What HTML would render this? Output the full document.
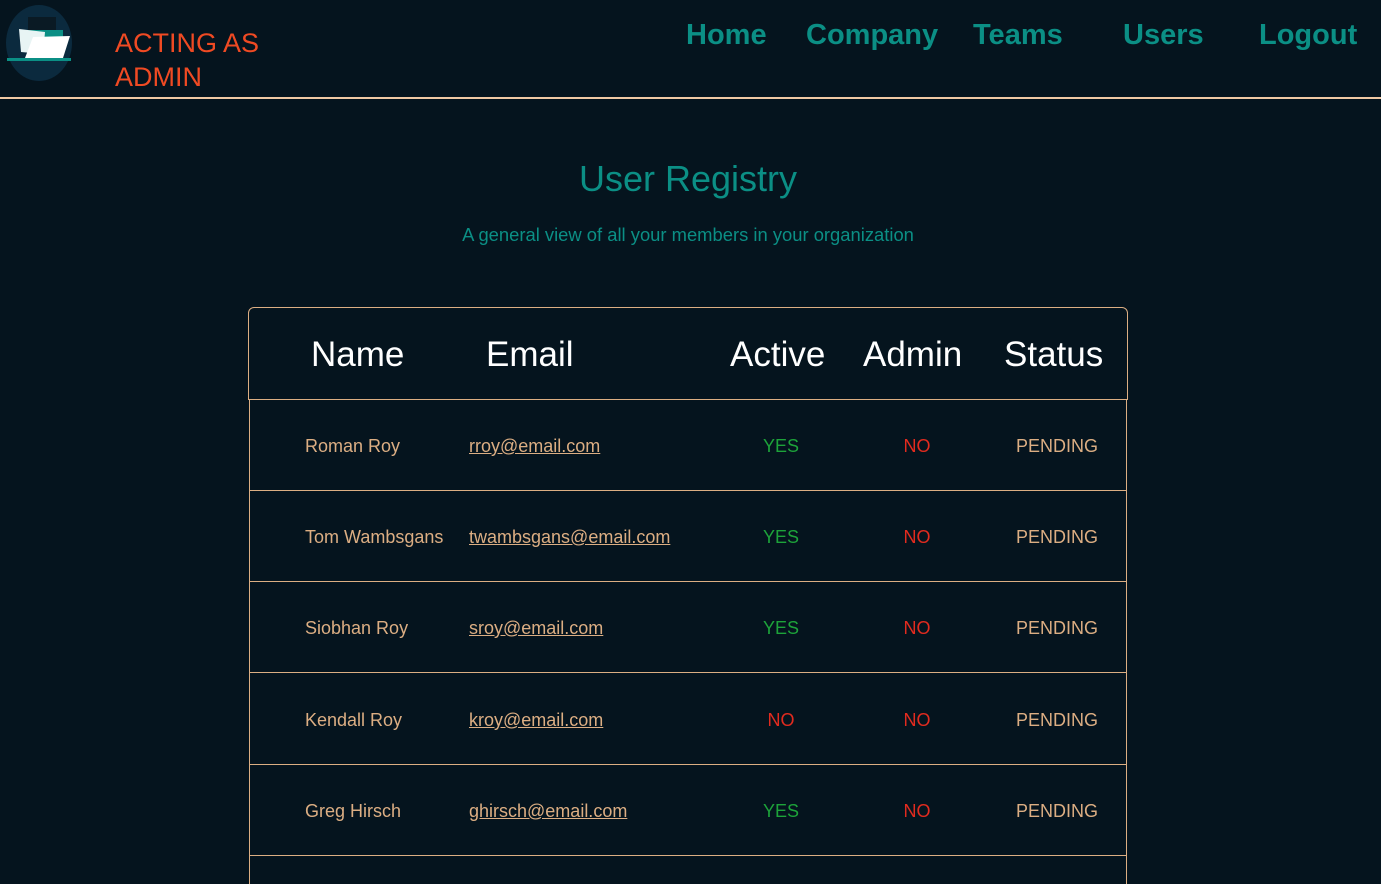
<!DOCTYPE html>
<html style="overflow:hidden;height:884px"><head><meta charset="utf-8"><style>
html,body{margin:0;width:1381px;height:884px;overflow:hidden}
body{background:#05141e;font-family:"Liberation Sans",sans-serif;position:relative}
.a{position:absolute;white-space:nowrap}
.nav{top:19px;font-weight:bold;font-size:29px;color:#0b8f85}
.hd{color:#fff;font-size:35px;top:335px}
.row{position:absolute;left:249px;width:876px;height:90px;border-left:1px solid #dcae83;border-right:1px solid #dcae83;border-bottom:1px solid #dcae83}
.row span{position:absolute;top:36px;font-size:18px;white-space:nowrap}
.n{left:55px;color:#dcae83}
.e{left:219px;color:#dcae83;text-decoration:underline}
.c{transform:translateX(-50%)}
.y{color:#1da33a}.no{color:#e22b1f}.p{color:#dcae83}
</style></head><body>
<svg class="a" style="left:5px;top:4px" width="68" height="78" viewBox="0 0 68 78">
<ellipse cx="34" cy="39" rx="33" ry="38" fill="#0b2a3e"/>
<rect x="23" y="13" width="28" height="20" fill="#0a1a24"/>
<rect x="22" y="26" width="36" height="30" fill="#0b8f85"/>
<polygon points="14,25 40,28 38,50 16,48" fill="#e8f4f4"/>
<polygon points="28,33 65,32 58,54 20,54" fill="#fff"/>
<rect x="2" y="54" width="64" height="3" fill="#0b8f85"/>
</svg>
<div class="a" style="left:115px;top:26px;font-size:27px;line-height:34px;color:#f04a23">ACTING AS<br>ADMIN</div>
<div class="a nav" style="left:686px">Home</div>
<div class="a nav" style="left:806px">Company</div>
<div class="a nav" style="left:973px">Teams</div>
<div class="a nav" style="left:1123px">Users</div>
<div class="a nav" style="left:1259px">Logout</div>
<div class="a" style="left:0;top:97px;width:1381px;height:2px;background:#f0c9a4"></div>
<div class="a" style="left:0;width:1376px;text-align:center;top:158px;font-size:36px;color:#0b8f85">User Registry</div>
<div class="a" style="left:0;width:1376px;text-align:center;top:224px;font-size:18.4px;color:#0b8f85">A general view of all your members in your organization</div>
<div class="a" style="left:248px;top:307px;width:878px;height:91px;border:1px solid #dcae83;border-radius:6px 6px 0 0"></div>
<div class="a hd" style="left:311px">Name</div>
<div class="a hd" style="left:486px">Email</div>
<div class="a hd" style="left:730px">Active</div>
<div class="a hd" style="left:863px">Admin</div>
<div class="a hd" style="left:1004px">Status</div>
<div class="row" style="top:400px"><span class="n">Roman Roy</span><span class="e">rroy@email.com</span><span class="c y" style="left:531px">YES</span><span class="c no" style="left:667px">NO</span><span class="c p" style="left:807px">PENDING</span></div>
<div class="row" style="top:491px"><span class="n">Tom Wambsgans</span><span class="e">twambsgans@email.com</span><span class="c y" style="left:531px">YES</span><span class="c no" style="left:667px">NO</span><span class="c p" style="left:807px">PENDING</span></div>
<div class="row" style="top:582px"><span class="n">Siobhan Roy</span><span class="e">sroy@email.com</span><span class="c y" style="left:531px">YES</span><span class="c no" style="left:667px">NO</span><span class="c p" style="left:807px">PENDING</span></div>
<div class="row" style="top:673px;height:91px"><span class="n" style="top:37px">Kendall Roy</span><span class="e" style="top:37px">kroy@email.com</span><span class="c no" style="left:531px;top:37px">NO</span><span class="c no" style="left:667px;top:37px">NO</span><span class="c p" style="left:807px;top:37px">PENDING</span></div>
<div class="row" style="top:765px"><span class="n">Greg Hirsch</span><span class="e">ghirsch@email.com</span><span class="c y" style="left:531px">YES</span><span class="c no" style="left:667px">NO</span><span class="c p" style="left:807px">PENDING</span></div>
<div class="row" style="top:856px;height:28px;border-bottom:none"></div>
</body></html>
